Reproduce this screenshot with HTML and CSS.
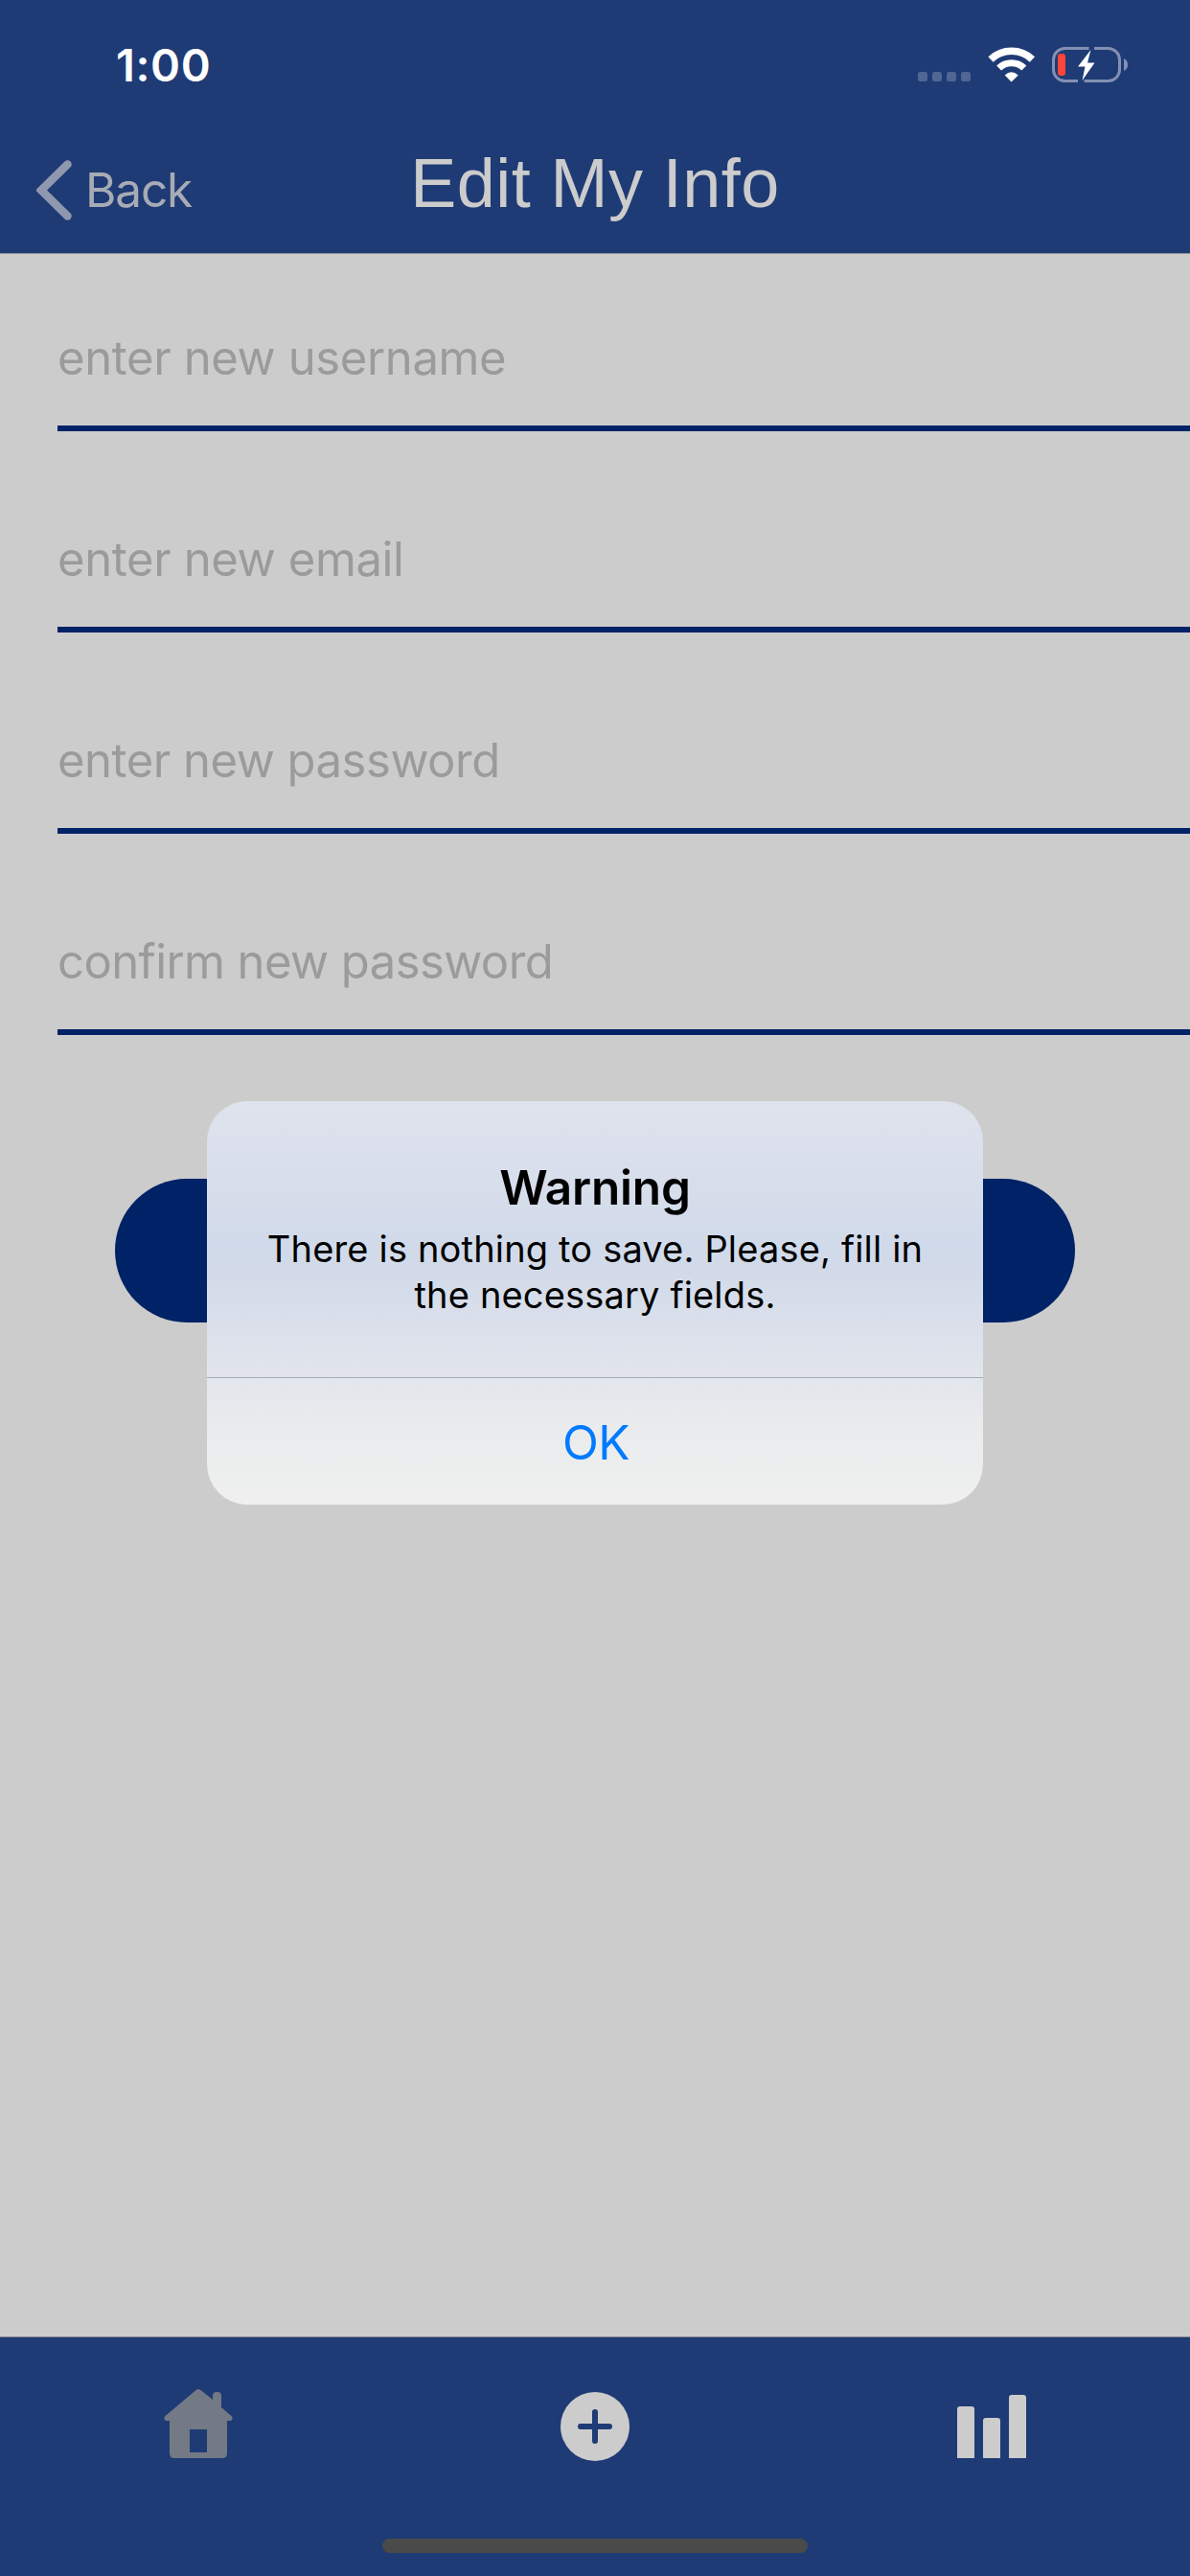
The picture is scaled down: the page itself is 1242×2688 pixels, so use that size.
FILE: index.html
```html
<!DOCTYPE html>
<html lang="en">
<head>
<meta charset="utf-8">
<title>Edit My Info</title>
<link rel="stylesheet" href="styles.css">
</head>
<body>
<div class="screen">
  <header class="header">
    <div class="status">
      <span class="time">1:00</span>
      <svg class="status-icons" width="222" height="40" viewBox="0 0 222 40">
        <g fill="#fff" fill-opacity=".22"><rect x="0" y="27" width="10" height="10" rx="2.5"/><rect x="15" y="27" width="10" height="10" rx="2.5"/><rect x="30" y="27" width="10" height="10" rx="2.5"/><rect x="45" y="27" width="10" height="10" rx="2.5"/></g>
        <g fill="none" stroke="#fff"><path d="M76 13.9A31.5 31.5 0 0 1 119.400 13.900" stroke-width="7.600"/><path d="M84.600 23.100A18.700 18.700 0 0 1 110.800 23.100" stroke-width="7"/></g>
        <path d="M90.700 30.600Q97.500 24 104.700 30.600L97.600 37.500Z" fill="#fff"/>
        <path d="M178.500 2.500H154A12 12 0 0 0 141.500 14V24A12 12 0 0 0 154 36.500H167M184 2.500H198A12 12 0 0 1 210.500 14V24A12 12 0 0 1 198 36.500H173.500" fill="none" stroke="#8290b3" stroke-width="3"/>
        <path d="M215 13Q219 15 219 19.500T215 26Z" fill="#8290b3"/>
        <rect x="146" y="8" width="8" height="23" rx="3" fill="#ff453a"/>
        <path d="M180.500 4L167 21.500H174.500L171.500 36L184.500 17.500H177Z" fill="#fff"/>
      </svg>
    </div>
    <nav class="nav">
      <div class="back"><svg width="38" height="64" viewBox="0 0 38 64"><path d="M32.500 4.500L5 31.500L32.500 58.500" fill="none" stroke="#8f98ae" stroke-width="8.500" stroke-linecap="round"/></svg><span>Back</span></div>
      <h1 class="title">Edit My Info</h1>
    </nav>
  </header>
  <main class="form">
    <label class="field">enter new username</label>
    <label class="field">enter new email</label>
    <label class="field password">enter new password</label>
    <label class="field confirm">confirm new password</label>
    <div class="save"></div>
  </main>
  <footer class="tabs">
    <div class="tab"><svg width="72" height="76" viewBox="0 0 72 76"><path fill="#737985" fill-rule="evenodd" d="M33 1.500Q36 -1.500 39 1.500L51 11V7Q51 3 55 3H56Q60 3 60 7V19L70.500 28Q73 31 70 33H66V67Q66 72 61 72H11Q6 72 6 67V33H2Q-1 31 1.500 28ZM27 42V66H45V42Z"/></svg></div>
    <div class="tab"><svg width="72" height="76" viewBox="0 0 72 76"><circle cx="36" cy="39" r="36" fill="#ccc"/><path d="M36 24V54M21 39H51" stroke="#1f3b75" stroke-width="6" stroke-linecap="round"/></svg></div>
    <div class="tab"><svg width="72" height="76" viewBox="0 0 72 76"><path fill="#ccc" d="M0 72V21Q0 18 3 18H15Q18 18 18 21V72ZM27 72V33Q27 30 30 30H42Q45 30 45 33V72ZM54 72V9Q54 6 57 6H69Q72 6 72 9V72Z"/></svg></div>
    <div class="home-bar"></div>
  </footer>
  <section class="alert">
    <div class="alert-text"><h2>Warning</h2><p>There is nothing to save. Please, fill in<br>the necessary fields.</p></div>
    <button class="ok">OK</button>
  </section>
</div>
</body>
</html>
```

FILE: styles.css
```css
* { box-sizing: border-box; }
body { margin: 0; font-family: Inter, "Liberation Sans", sans-serif; }
.screen { position: relative; display: flex; flex-direction: column; width: 1242px; height: 2688px; overflow: hidden; background: #ccc; }
.header { height: 265px; background: #1f3b75; border-bottom: 1px solid #8b8c8e; }
.status { display: flex; justify-content: space-between; height: 132px; padding: 39px 62px 0 121px; color: #fff; }
.time { font-size: 47px; font-weight: 600; line-height: 58px; letter-spacing: 0.6px; }
.status-icons { margin-top: 9px; }
.nav { display: grid; grid-template-columns: 1fr auto 1fr; height: 132px; }
.back { display: flex; align-items: flex-start; gap: 13px; padding: 35px 0 0 38px; color: #a7abb5; font-size: 49.5px; line-height: 62px; letter-spacing: -1.15px; }
.title { margin: 16px 0 0; color: #ccc; font: 400 72px/86px "Liberation Sans", Arial, sans-serif; letter-spacing: 0.45px; }
.form { flex: 1; display: flex; flex-direction: column; padding-left: 60px; }
.field { height: 210px; padding-top: 104px; border-bottom: 6px solid #002266; color: #9b9b9b; font-size: 49px; line-height: 60px; letter-spacing: -0.37px; }
.field:first-child { height: 185px; padding-top: 79px; }
.password { letter-spacing: -0.48px; }
.confirm { letter-spacing: -0.58px; }
.save { width: 1002px; height: 150px; margin: 150px 0 0 60px; border-radius: 75px; background: #002266; }
.tabs { display: grid; grid-template-columns: repeat(3, 1fr); grid-template-rows: 210px 15px; height: 250px; border-top: 1px solid #8b8c8e; background: #1f3b75; }
.tab { display: flex; justify-content: center; padding-top: 54px; }
.home-bar { grid-column: 1 / -1; justify-self: center; width: 444px; height: 15px; border-radius: 8px; background: #4a4a4a; }
.alert { position: absolute; left: 216px; top: 1149px; width: 810px; height: 421px; border-radius: 42px; overflow: hidden; background: linear-gradient(#dfe3ed, #d1daea 36%, #d2dae9 42%, #e2e5ec 68%, #e9ebed 80%, #eff0ef); color: #000; }
.alert-text { height: 289px; padding-top: 59px; border-bottom: 1px solid #a3a9b6; text-align: center; }
.alert h2 { margin: 0; font-size: 49.5px; font-weight: 600; line-height: 62px; letter-spacing: -0.2px; }
.alert p { margin: 9px 0 0; font-size: 38px; line-height: 48px; letter-spacing: 0.17px; }
.ok { display: block; width: 100%; height: 132px; padding: 2px 0 0 2px; border: 0; background: none; color: #007aff; font: 400 49.5px/62px Inter, sans-serif; letter-spacing: -0.5px; }
```
